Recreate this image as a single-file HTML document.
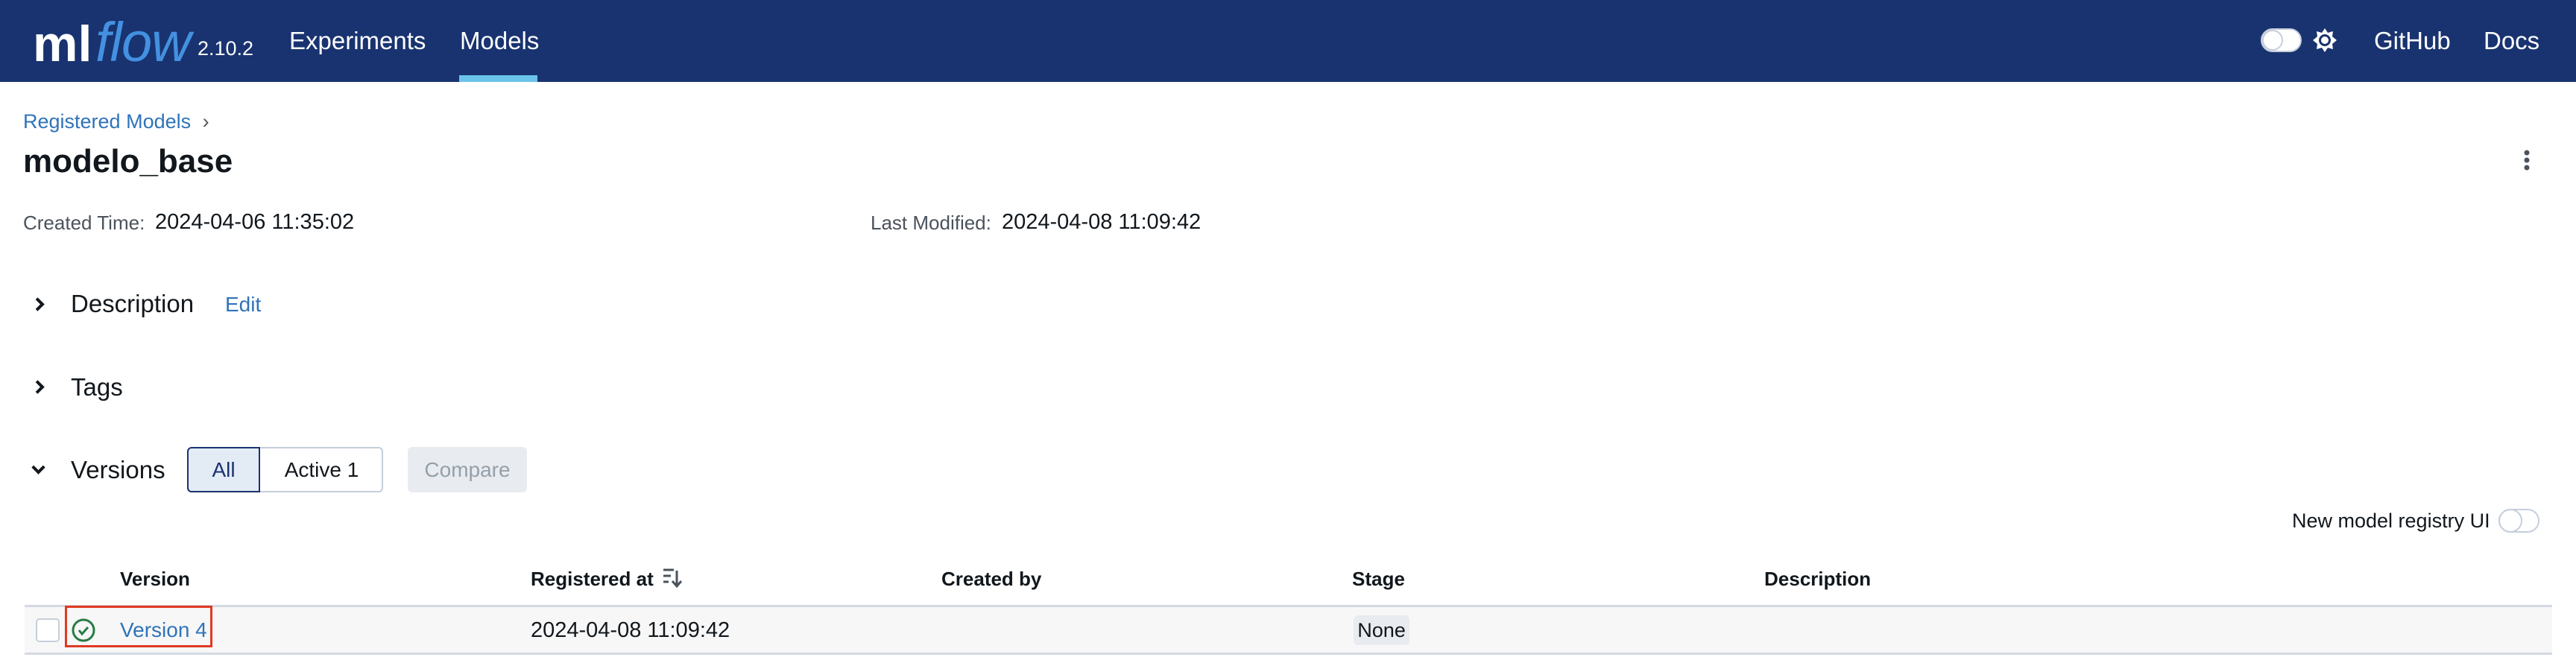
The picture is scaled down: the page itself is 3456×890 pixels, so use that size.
<!DOCTYPE html>
<html><head><meta charset="utf-8"><style>
*{box-sizing:border-box;margin:0;padding:0}
body{width:3456px;height:890px;background:#fff;font-family:"Liberation Sans",Arial,sans-serif;color:#11171c;position:relative;overflow:hidden}
.a{position:absolute;white-space:nowrap}
.hdr{position:absolute;left:0;top:0;width:3456px;height:110px;background:#193370}
.nav{color:#fff;font-size:33px;top:36px}
.chev{position:absolute;width:13px;height:13px;border-right:4px solid #11171c;border-bottom:4px solid #11171c}
.th{font-size:26px;font-weight:bold;top:762px}
</style></head><body>
<div class="hdr"></div>
<div class="a" style="left:44px;top:20px;font-size:68px;font-weight:bold;color:#fff;letter-spacing:0">ml</div>
<div class="a" style="left:128px;top:14px;font-size:74px;font-style:italic;color:#4391e0;letter-spacing:-1px">flow</div>
<div class="a" style="left:265px;top:50px;font-size:27px;color:#fff">2.10.2</div>
<div class="a nav" style="left:388px">Experiments</div>
<div class="a nav" style="left:617px">Models</div>
<div class="a" style="left:616px;top:101px;width:105px;height:9px;background:#6bc4ea"></div>
<div class="a" style="left:3033px;top:38px;width:55px;height:32px;border-radius:16px;background:#fff;border:2px solid #c5cfdb"></div>
<div class="a" style="left:3035px;top:40px;width:28px;height:28px;border-radius:14px;background:#fff;border:2px solid #c5cfdb"></div>
<svg class="a" style="left:3102px;top:37px" width="34" height="34" viewBox="0 0 34 34"><polygon points="17,1 21,7 28,5 27,12 33,17 27,22 28,29 21,27 17,33 13,27 6,29 7,22 1,17 7,12 6,5 13,7" fill="#fff"/><circle cx="17" cy="17" r="6.5" fill="none" stroke="#193370" stroke-width="3"/></svg>
<div class="a nav" style="left:3185px">GitHub</div>
<div class="a nav" style="left:3332px">Docs</div>

<div class="a" style="left:31px;top:148px;font-size:27px;color:#2f73b9">Registered Models <span style="color:#555;margin-left:8px">›</span></div>
<div class="a" style="left:31px;top:192px;font-size:44px;font-weight:bold">modelo_base</div>
<svg class="a" style="left:3382px;top:200px" width="16" height="32"><circle cx="8" cy="5" r="3.5" fill="#4a535c"/><circle cx="8" cy="15" r="3.5" fill="#4a535c"/><circle cx="8" cy="25" r="3.5" fill="#4a535c"/></svg>

<div class="a" style="left:31px;top:284px;font-size:26px;color:#4a535c">Created Time:</div>
<div class="a" style="left:208px;top:282px;font-size:29px">2024-04-06 11:35:02</div>
<div class="a" style="left:1168px;top:284px;font-size:26px;color:#4a535c">Last Modified:</div>
<div class="a" style="left:1344px;top:282px;font-size:29px">2024-04-08 11:09:42</div>

<div class="chev" style="left:44px;top:402px;transform:rotate(-45deg)"></div>
<div class="a" style="left:95px;top:389px;font-size:33px">Description</div>
<div class="a" style="left:302px;top:393px;font-size:28px;color:#2f73b9">Edit</div>
<div class="chev" style="left:44px;top:513px;transform:rotate(-45deg)"></div>
<div class="a" style="left:95px;top:501px;font-size:33px">Tags</div>
<div class="chev" style="left:45px;top:621px;transform:rotate(45deg)"></div>
<div class="a" style="left:95px;top:612px;font-size:33px">Versions</div>
<div class="a" style="left:251px;top:600px;width:263px;height:61px;border:2px solid #c5cfdb;border-radius:6px"></div>
<div class="a" style="left:251px;top:600px;width:98px;height:61px;border:2px solid #193370;border-radius:6px 0 0 6px;background:#e3ebf5;color:#193370;font-size:28px;text-align:center;line-height:57px">All</div>
<div class="a" style="left:349px;top:600px;width:165px;height:61px;font-size:28px;text-align:center;line-height:61px">Active 1</div>
<div class="a" style="left:547px;top:600px;width:160px;height:61px;border-radius:6px;background:#e8ebef;color:#94a0ac;font-size:28px;text-align:center;line-height:61px">Compare</div>

<div class="a" style="left:3075px;top:684px;font-size:27px">New model registry UI</div>
<div class="a" style="left:3352px;top:683px;width:55px;height:32px;border-radius:16px;border:2px solid #c5cfdb"></div>
<div class="a" style="left:3352px;top:683px;width:32px;height:32px;border-radius:16px;border:2px solid #c5cfdb"></div>

<div class="a th" style="left:161px">Version</div>
<div class="a th" style="left:712px">Registered at</div>
<svg class="a" style="left:888px;top:762px" width="30" height="30"><path d="M2 3h14M2 11h10M2 19h7M20 4v20M14 18l6 7 6-7" fill="none" stroke="#4a535c" stroke-width="3"/></svg>
<div class="a th" style="left:1263px">Created by</div>
<div class="a th" style="left:1814px">Stage</div>
<div class="a th" style="left:2367px">Description</div>

<div class="a" style="left:33px;top:812px;width:3391px;height:67px;background:#f7f7f7;border-top:3px solid #d4dae3;border-bottom:3px solid #d4dae3"></div>
<div class="a" style="left:48px;top:830px;width:32px;height:32px;border:2px solid #c5cfdb;border-radius:5px;background:#fff"></div>
<svg class="a" style="left:95px;top:829px" width="34" height="34"><circle cx="17" cy="17" r="14" fill="none" stroke="#277c43" stroke-width="3"/><path d="M11 17l4 5 8-9" fill="none" stroke="#277c43" stroke-width="3"/></svg>
<div class="a" style="left:161px;top:830px;font-size:28px;color:#2f73b9">Version 4</div>
<div class="a" style="left:87px;top:813px;width:198px;height:56px;border:3px solid #e03a22"></div>
<div class="a" style="left:712px;top:830px;font-size:29px">2024-04-08 11:09:42</div>
<div class="a" style="left:1816px;top:826px;width:75px;height:40px;border-radius:6px;background:#e8ebef;font-size:27px;text-align:center;line-height:40px">None</div>
</body></html>
